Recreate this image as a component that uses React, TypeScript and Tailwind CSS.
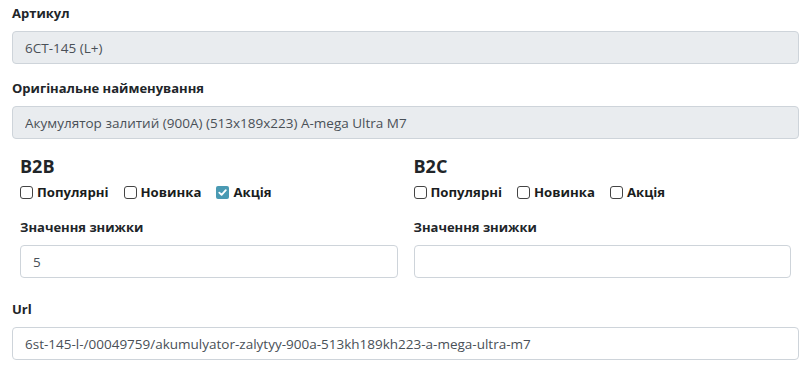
import React from "react";

const labelCls =
  "block h-[20px] leading-[20px] text-[13px] font-bold text-[#212529] mb-[8px]";
const roInput =
  "w-full h-[33px] rounded-[4px] border border-[#ced4da] bg-[#e9ecef] px-[12px] text-[13.5px] text-[#495057] outline-none";
const wInput =
  "w-full h-[33px] rounded-[4px] border border-[#ced4da] bg-white px-[12px] text-[13.5px] text-[#495057] outline-none";

function Check({ label, checked }: { label: string; checked?: boolean }) {
  return (
    <label className="flex items-center mr-[15px]">
      {checked ? (
        <span className="w-[13px] h-[13px] rounded-[2px] bg-[#4a9ab3] flex items-center justify-center">
          <svg width="11" height="11" viewBox="0 0 12 12">
            <path d="M2.5 6.2 L5 8.6 L9.6 3.4" fill="none" stroke="white" strokeWidth="2" strokeLinecap="round" strokeLinejoin="round" />
          </svg>
        </span>
      ) : (
        <span className="w-[13px] h-[13px] rounded-[3px] border border-[#444] bg-white" />
      )}
      <span className="ml-[4px] text-[13.2px] font-bold text-[#1a1d20]">{label}</span>
    </label>
  );
}

function Column({ title, value, akcia }: { title: string; value: string; akcia?: boolean }) {
  return (
    <div className="px-[8px]">
      <div className="h-[24px] leading-[24px] text-[18px] font-bold text-[#212529]">{title}</div>
      <div className="flex items-center h-[22px] mt-[4px]">
        <Check label="Популярні" />
        <Check label="Новинка" />
        <Check label="Акція" checked={akcia} />
      </div>
      <div className="mt-[13px]">
        <label className={labelCls}>Значення знижки</label>
        <input className={wInput} defaultValue={value} />
      </div>
    </div>
  );
}

export default function App() {
  return (
    <div
      className="w-[810px] h-[371px] bg-white px-[12px] pt-[3px] overflow-hidden"
      style={{ fontFamily: '"Open Sans", "Noto Sans", sans-serif' }}
    >
      <div className="w-[787px]">
        <div className="mb-[14px]">
          <label className={labelCls}>Артикул</label>
          <input className={roInput} readOnly value="6CT-145 (L+)" />
        </div>
        <div className="mb-[15px]">
          <label className={labelCls}>Оригінальне найменування</label>
          <input
            className={roInput}
            readOnly
            value="Акумулятор залитий (900А) (513х189х223) A-mega Ultra M7"
          />
        </div>
        <div className="grid grid-cols-2">
          <Column title="B2B" value="5" akcia />
          <Column title="B2C" value="" />
        </div>
        <div className="mt-[21px]">
          <label className={labelCls}>Url</label>
          <input
            className={wInput}
            readOnly
            value="6st-145-l-/00049759/akumulyator-zalytyy-900a-513kh189kh223-a-mega-ultra-m7"
          />
        </div>
      </div>
    </div>
  );
}
